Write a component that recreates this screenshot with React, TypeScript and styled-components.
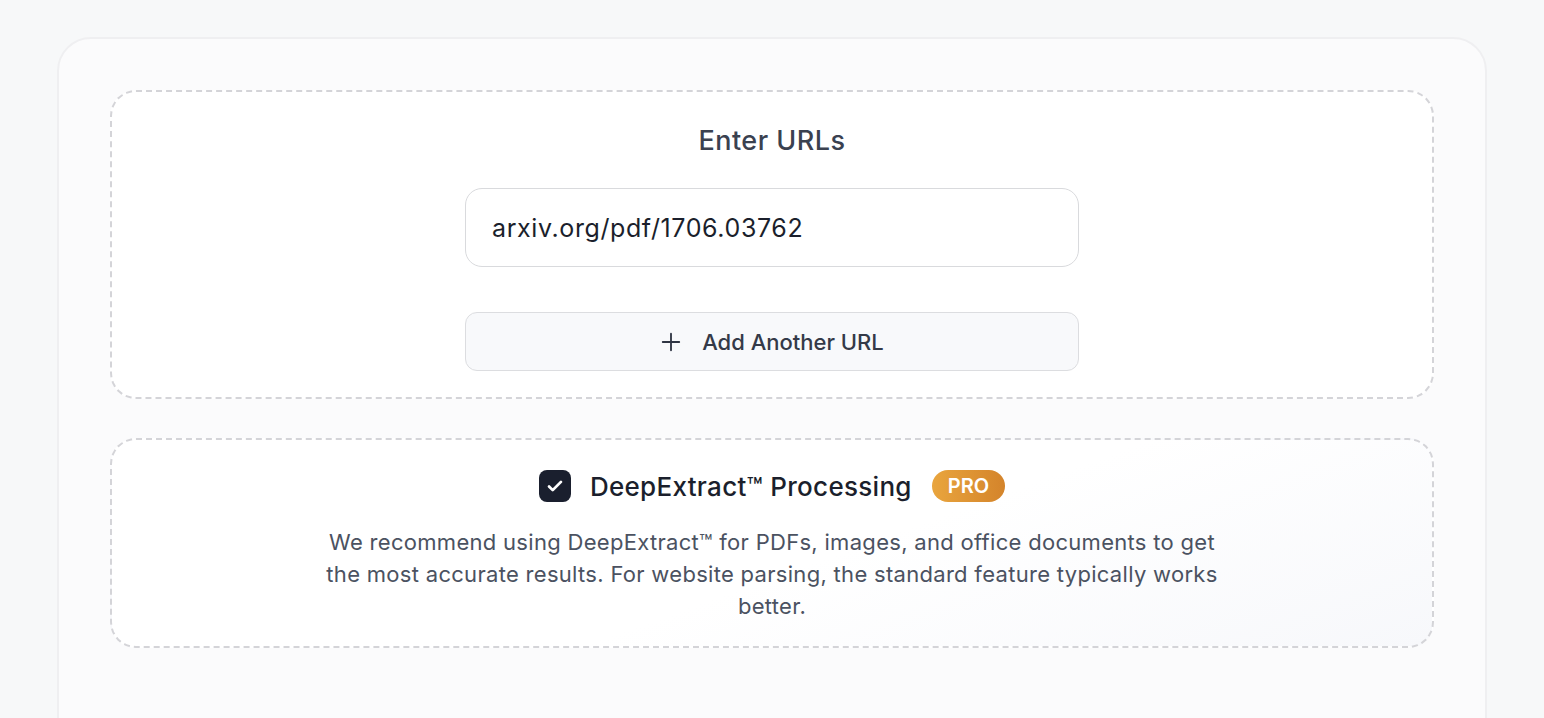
import React from "react";
import styled, { createGlobalStyle } from "styled-components";

const Global = createGlobalStyle`
  html, body { margin: 0; padding: 0; background: #f7f8f9; }
  body { font-family: Inter, "Open Sans", sans-serif; -webkit-font-smoothing: antialiased; }
  * { box-sizing: border-box; }
`;

const Page = styled.div`
  padding-top: 37px;
  display: flex;
  justify-content: center;
  height: 718px;
  overflow: hidden;
`;

const Card = styled.div`
  flex: none;
  align-self: flex-start;
  width: 1430px;
  background: #fbfbfc;
  border: 2px solid #efeff1;
  border-radius: 34px;
  padding: 51px 51px 100px;
  display: flex;
  flex-direction: column;
  gap: 39px;
`;

const DashedBox = styled.div<{ $tint?: boolean }>`
  border: 2px dashed #d4d4d8;
  border-radius: 26px;
  background: ${(p) =>
    p.$tint ? "linear-gradient(160deg, #ffffff 55%, #f7f8fb 100%)" : "#ffffff"};
  display: flex;
  flex-direction: column;
  align-items: center;
`;

const UrlBox = styled(DashedBox)`
  padding: 30px 0 26px;
`;

const Title = styled.h2`
  margin: 0 0 28px;
  font-size: 27px;
  line-height: 38px;
  font-weight: 500;
  color: #3a4150;
  letter-spacing: 0.5px;
`;

const UrlInput = styled.div`
  width: 614px;
  height: 79px;
  border: 1px solid #d9dadd;
  border-radius: 17px;
  background: #fff;
  display: flex;
  align-items: center;
  padding-left: 26px;
  font-size: 25px;
  color: #1b1f2c;
  letter-spacing: 0.6px;
`;

const AddButton = styled.button`
  margin-top: 45px;
  width: 614px;
  height: 59px;
  border: 1px solid #dcdde0;
  border-radius: 12px;
  background: #f8f9fb;
  display: flex;
  align-items: center;
  justify-content: center;
  gap: 20px;
  font-family: inherit;
  font-size: 22px;
  font-weight: 500;
  color: #343a48;
  letter-spacing: 0;
  cursor: pointer;
`;

const ProcessingBox = styled(DashedBox)`
  padding: 30px 0 24px;
`;

const OptionRow = styled.div`
  display: flex;
  align-items: center;
  height: 32px;
`;

const Check = styled.span`
  width: 32px;
  height: 32px;
  border-radius: 8px;
  background: #1a1f2e;
  display: inline-flex;
  align-items: center;
  justify-content: center;
  margin-right: 19px;
`;

const OptionLabel = styled.span`
  font-size: 26px;
  font-weight: 500;
  color: #1b1f2c;
  letter-spacing: 0.3px;
  margin-right: 20px;
`;

const ProBadge = styled.span`
  height: 32px;
  padding: 0 16px;
  border-radius: 999px;
  background: linear-gradient(90deg, #e9a53e, #d4842b);
  color: #fff;
  font-size: 20px;
  font-weight: 600;
  display: inline-flex;
  align-items: center;
`;

const Description = styled.p`
  margin: 24px 0 0;
  max-width: 900px;
  text-align: center;
  font-size: 22px;
  line-height: 32px;
  color: #4b5261;
  letter-spacing: 0.3px;
`;

export default function App() {
  return (
    <>
      <Global />
      <Page>
        <Card>
          <UrlBox>
            <Title>Enter URLs</Title>
            <UrlInput>arxiv.org/pdf/1706.03762</UrlInput>
            <AddButton>
              <svg width="22" height="22" viewBox="0 0 24 24" fill="none" stroke="#2f3543" strokeWidth="2" strokeLinecap="round">
                <path d="M12 3v18M3 12h18" />
              </svg>
              Add Another URL
            </AddButton>
          </UrlBox>
          <ProcessingBox $tint>
            <OptionRow>
              <Check>
                <svg width="22" height="22" viewBox="0 0 24 24" fill="none" stroke="#fff" strokeWidth="3" strokeLinecap="round" strokeLinejoin="round">
                  <path d="M5.5 12.5l4 4L18.5 7.5" />
                </svg>
              </Check>
              <OptionLabel>DeepExtract™ Processing</OptionLabel>
              <ProBadge>PRO</ProBadge>
            </OptionRow>
            <Description>
              We recommend using DeepExtract™ for PDFs, images, and office documents to get the most accurate results. For website parsing, the standard feature typically works better.
            </Description>
          </ProcessingBox>
        </Card>
      </Page>
    </>
  );
}
